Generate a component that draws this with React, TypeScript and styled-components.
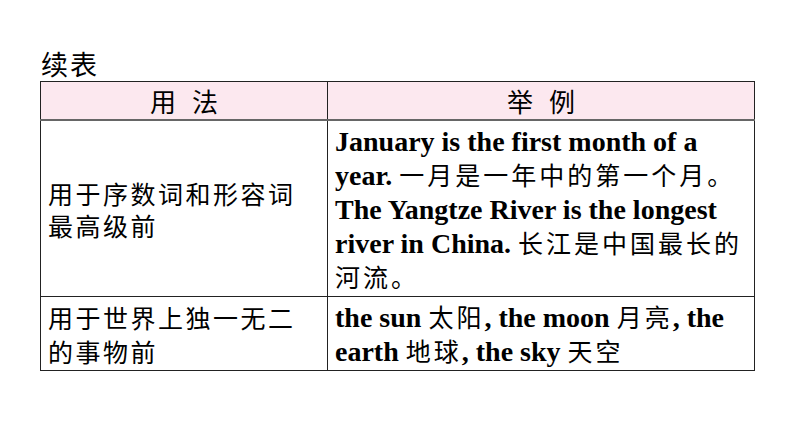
import styled, { createGlobalStyle } from "styled-components";

const Global = createGlobalStyle`
  html, body { margin: 0; padding: 0; background: #fff; }
  body { font-family: "Liberation Serif", "Noto Sans CJK SC", serif; color: #000; }
`;

const Page = styled.div`
  width: 794px;
  height: 447px;
  padding: 50px 0 0 40px;
  box-sizing: border-box;
`;

const Title = styled.div`
  font-family: "Noto Sans CJK SC", sans-serif;
  font-size: 27px;
  line-height: 27px;
  letter-spacing: 2px;
  margin-left: 1px;
  height: 31px;
`;

const Table = styled.table`
  border-collapse: collapse;
  width: 714px;
  table-layout: fixed;
`;

const HeadCell = styled.th`
  background: #fce8ef;
  border: 1px solid #222;
  border-bottom: 2px solid #666;
  height: 37px;
  padding: 0 0 0 5px;
  font-family: "Noto Sans CJK SC", sans-serif;
  font-weight: 400;
  font-size: 26px;
  line-height: 30px;
  letter-spacing: 5px;
  text-align: center;
  vertical-align: middle;
`;

const UsageCell = styled.td<{ $lh: number }>`
  border: 1px solid #222;
  padding: 0 16px 0 7px;
  font-family: "Noto Sans CJK SC", sans-serif;
  font-size: 25px;
  letter-spacing: 2.5px;
  line-height: ${(p) => p.$lh}px;
  vertical-align: middle;
`;

const ExampleCell = styled.td`
  border: 1px solid #222;
  padding: 4px 9px 1px 7px;
  font-family: "Liberation Serif", "Noto Sans CJK SC", serif;
  font-weight: 700;
  font-size: 28px;
  line-height: 34px;
  vertical-align: top;
`;

const Zh = styled.span`
  font-family: "Noto Sans CJK SC", sans-serif;
  font-weight: 400;
  font-size: 25px;
  line-height: 20px;
  letter-spacing: 3px;
`;

export default function App() {
  return (
    <Page>
      <Global />
      <Title>续表</Title>
      <Table>
        <colgroup>
          <col style={{ width: 287 }} />
          <col style={{ width: 427 }} />
        </colgroup>
        <thead>
          <tr>
            <HeadCell>用 法</HeadCell>
            <HeadCell>举 例</HeadCell>
          </tr>
        </thead>
        <tbody>
          <tr>
            <UsageCell $lh={32}>用于序数词和形容词最高级前</UsageCell>
            <ExampleCell>
              January is the first month of a year. <Zh>一月是一年中的第一个月。</Zh>
              The Yangtze River is the longest river in China. <Zh>长江是中国最长的河流。</Zh>
            </ExampleCell>
          </tr>
          <tr>
            <UsageCell $lh={34}>用于世界上独一无二的事物前</UsageCell>
            <ExampleCell>
              the sun <Zh>太阳</Zh>, the moon <Zh>月亮</Zh>, the earth <Zh>地球</Zh>, the sky <Zh>天空</Zh>
            </ExampleCell>
          </tr>
        </tbody>
      </Table>
    </Page>
  );
}
